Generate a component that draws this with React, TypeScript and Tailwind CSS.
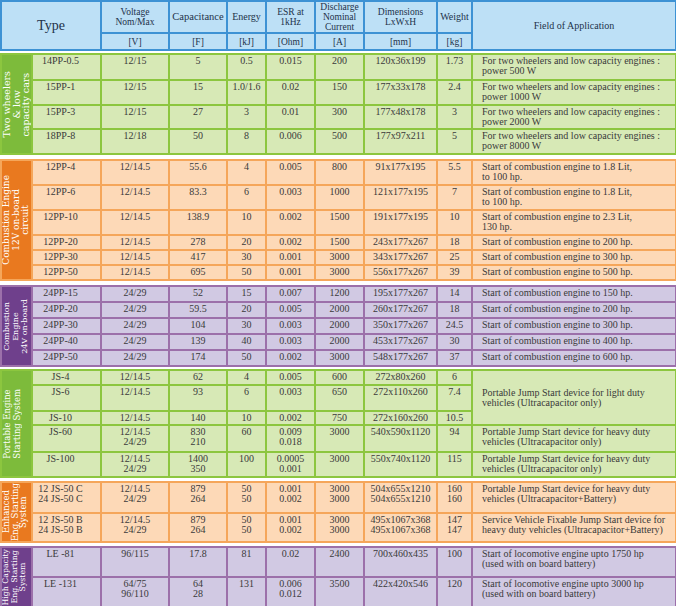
import React from 'react';

type Theme = { border: string; bg: string; label: string };

type Row = {
  h: string;
  cells: (string | null)[];
  mid?: boolean;
  fieldSpan?: number;
};

const green: Theme = { border: 'border-[#8cc63f]', bg: 'bg-[#d7e9b6]', label: 'bg-[#7dbb3b]' };
const orange: Theme = { border: 'border-[#f5a65a]', bg: 'bg-[#fdd9b7]', label: 'bg-[#e9791f]' };
const purple: Theme = { border: 'border-[#9c70aa]', bg: 'bg-[#d1c9e3]', label: 'bg-[#6f408c]' };

const Cols = () => (
  <colgroup>
    <col className="w-[31px]" />
    <col className="w-[69px]" />
    <col className="w-[68px]" />
    <col className="w-[58px]" />
    <col className="w-[39px]" />
    <col className="w-[49px]" />
    <col className="w-[49px]" />
    <col className="w-[73px]" />
    <col className="w-[35px]" />
    <col className="w-[204px]" />
  </colgroup>
);

const Group: React.FC<{ theme: Theme; label: React.ReactNode; rows: Row[]; className?: string }> = ({
  theme,
  label,
  rows,
  className = '',
}) => (
  <table className={`w-[675px] table-fixed border-collapse ${className}`}>
    <Cols />
    <tbody>
      {rows.map((r, i) => (
        <tr key={i} className={r.h}>
          {i === 0 && (
            <td rowSpan={rows.length} className={`${theme.label} ${theme.border} border-2 p-0 align-middle overflow-hidden`}>
              {label}
            </td>
          )}
          {r.cells.map((c, j) => {
            if (c === null) return null;
            const isField = j === 8;
            const align = isField ? 'text-left pl-[9px] pr-1' : j === 0 ? 'text-center pr-3' : 'text-center';
            const valign = r.mid && isField ? 'align-middle' : 'align-top pt-[1px]';
            return (
              <td
                key={j}
                rowSpan={isField && r.fieldSpan ? r.fieldSpan : undefined}
                className={`${theme.bg} ${theme.border} border-2 whitespace-pre-line leading-[10px] ${align} ${valign}`}
              >
                {c}
              </td>
            );
          })}
        </tr>
      ))}
    </tbody>
  </table>
);

const Label: React.FC<{ lines: string[]; size: string }> = ({ lines, size }) => (
  <div
    className={`mx-auto rotate-180 [writing-mode:vertical-rl] whitespace-nowrap text-center text-white font-['DejaVu_Serif',serif] ${size}`}
  >
    {lines.map((l, i) => (
      <div key={i}>{l}</div>
    ))}
  </div>
);

const twoWheel = (w: string) => `For two wheelers and low capacity engines :\npower ${w}`;
const comb = (hp: string) => `Start of combustion engine to ${hp} hp.`;

const greenRows: Row[] = [
  { h: 'h-[26px]', cells: ['14PP-0.5', '12/15', '5', '0.5', '0.015', '200', '120x36x199', '1.73', twoWheel('500 W')] },
  { h: 'h-[25px]', cells: ['15PP-1', '12/15', '15', '1.0/1.6', '0.02', '150', '177x33x178', '2.4', twoWheel('1000 W')] },
  { h: 'h-[24px]', cells: ['15PP-3', '12/15', '27', '3', '0.01', '300', '177x48x178', '3', twoWheel('2000 W')] },
  { h: 'h-[25px]', cells: ['18PP-8', '12/18', '50', '8', '0.006', '500', '177x97x211', '5', twoWheel('8000 W')] },
];

const orangeRows: Row[] = [
  { h: 'h-[25px]', cells: ['12PP-4', '12/14.5', '55.6', '4', '0.005', '800', '91x177x195', '5.5', 'Start of combustion engine to 1.8 Lit,\nto 100 hp.'] },
  { h: 'h-[25px]', cells: ['12PP-6', '12/14.5', '83.3', '6', '0.003', '1000', '121x177x195', '7', 'Start of combustion engine to 1.8 Lit,\nto 100 hp.'] },
  { h: 'h-[25px]', cells: ['12PP-10', '12/14.5', '138.9', '10', '0.002', '1500', '191x177x195', '10', 'Start of combustion engine to 2.3 Lit,\n130 hp.'] },
  { h: 'h-[15px]', cells: ['12PP-20', '12/14.5', '278', '20', '0.002', '1500', '243x177x267', '18', comb('200')] },
  { h: 'h-[15px]', cells: ['12PP-30', '12/14.5', '417', '30', '0.001', '3000', '343x177x267', '25', comb('300')] },
  { h: 'h-[15px]', cells: ['12PP-50', '12/14.5', '695', '50', '0.001', '3000', '556x177x267', '39', comb('500')] },
];

const purpleRows: Row[] = [
  { h: 'h-[16px]', cells: ['24PP-15', '24/29', '52', '15', '0.007', '1200', '195x177x267', '14', comb('150')] },
  { h: 'h-[16px]', cells: ['24PP-20', '24/29', '59.5', '20', '0.005', '2000', '260x177x267', '18', comb('200')] },
  { h: 'h-[16px]', cells: ['24PP-30', '24/29', '104', '30', '0.003', '2000', '350x177x267', '24.5', comb('300')] },
  { h: 'h-[16px]', cells: ['24PP-40', '24/29', '139', '40', '0.003', '2000', '453x177x267', '30', comb('400')] },
  { h: 'h-[16px]', cells: ['24PP-50', '24/29', '174', '50', '0.002', '3000', '548x177x267', '37', comb('600')] },
];

const heavy = 'Portable Jump Start device for heavy duty\nvehicles (Ultracapacitor only)';

const portableRows: Row[] = [
  {
    h: 'h-[15px]',
    mid: true,
    fieldSpan: 3,
    cells: ['JS-4', '12/14.5', '62', '4', '0.005', '600', '272x80x260', '6', 'Portable Jump Start device for light duty\nvehicles (Ultracapacitor only)'],
  },
  { h: 'h-[26px]', cells: ['JS-6', '12/14.5', '93', '6', '0.003', '650', '272x110x260', '7.4', null] },
  { h: 'h-[14px]', cells: ['JS-10', '12/14.5', '140', '10', '0.002', '750', '272x160x260', '10.5', null] },
  { h: 'h-[27px]', cells: ['JS-60', '12/14.5\n24/29', '830\n210', '60', '0.009\n0.018', '3000', '540x590x1120', '94', heavy] },
  { h: 'h-[25px]', cells: ['JS-100', '12/14.5\n24/29', '1400\n350', '100', '0.0005\n0.001', '3000', '550x740x1120', '115', heavy] },
];

const enhancedRows: Row[] = [
  {
    h: 'h-[30px]',
    cells: ['12 JS-50 C\n24 JS-50 C', '12/14.5\n24/29', '879\n264', '50\n50', '0.001\n0.002', '3000\n3000', '504x655x1210\n504x655x1210', '160\n160', 'Portable Jump Start device for heavy duty\nvehicles (Ultracapacitor+Battery)'],
  },
  {
    h: 'h-[28px]',
    cells: ['12 JS-50 B\n24 JS-50 B', '12/14.5\n24/29', '879\n264', '50\n50', '0.001\n0.002', '3000\n3000', '495x1067x368\n495x1067x368', '147\n147', 'Service Vehicle Fixable Jump Start device for\nheavy duty vehicles (Ultracapacitor+Battery)'],
  },
];

const highRows: Row[] = [
  { h: 'h-[30px]', cells: ['LE -81', '96/115', '17.8', '81', '0.02', '2400', '700x460x435', '100', 'Start of locomotive engine upto 1750 hp\n(used with on board battery)'] },
  { h: 'h-[30px]', cells: ['LE -131', '64/75\n96/110', '64\n28', '131', '0.006\n0.012', '3500', '422x420x546', '120', 'Start of locomotive engine upto 3000 hp\n(used with on board battery)'] },
];

const Header = () => {
  const th = 'border-2 border-[#3d92d4] bg-[#bde0f6] text-center align-middle leading-[10px]';
  return (
    <table className="w-[675px] table-fixed border-collapse text-[#22324a]">
      <Cols />
      <tbody>
        <tr className="h-[31px]">
          <td colSpan={2} rowSpan={2} className={`${th} text-[14px]`}>
            Type
          </td>
          <td className={`${th} text-[9.5px]`}>
            Voltage
            <br />
            Nom/Max
          </td>
          <td className={`${th} text-[10.5px]`}>Capacitance</td>
          <td className={`${th} text-[10px]`}>Energy</td>
          <td className={`${th} text-[9.5px]`}>
            ESR at
            <br />
            1kHz
          </td>
          <td className={`${th} text-[9.5px] leading-[9.5px]`}>
            Discharge
            <br />
            Nominal
            <br />
            Current
          </td>
          <td className={`${th} text-[9.5px]`}>
            Dimensions
            <br />
            LxWxH
          </td>
          <td className={`${th} text-[10px]`}>Weight</td>
          <td rowSpan={2} className={`${th} text-[10px]`}>
            Field of Application
          </td>
        </tr>
        <tr className="h-[17px] text-[9.5px]">
          <td className={th}>[V]</td>
          <td className={th}>[F]</td>
          <td className={th}>[kJ]</td>
          <td className={th}>[Ohm]</td>
          <td className={th}>[A]</td>
          <td className={th}>[mm]</td>
          <td className={th}>[kg]</td>
        </tr>
      </tbody>
    </table>
  );
};

export default function App() {
  return (
    <div className="w-[676px] h-[606px] overflow-hidden bg-white font-['Liberation_Serif',serif] text-[10px] text-[#3a3a3a]">
      <Header />
      <Group
        className="mt-[2px]"
        theme={green}
        rows={greenRows}
        label={<Label size="text-[9.5px] leading-[9.5px]" lines={['Two wheelers', '& low', 'capacity cars']} />}
      />
      <Group
        className="mt-[4px]"
        theme={orange}
        rows={orangeRows}
        label={<Label size="text-[9px] leading-[9.5px]" lines={['Combustion Engine', '12V on-board', 'circuit']} />}
      />
      <Group
        className="mt-[4px]"
        theme={purple}
        rows={purpleRows}
        label={<Label size="text-[8px] leading-[9px]" lines={['Combustion', 'Engine', '24V on-board']} />}
      />
      <Group
        className="mt-[2px]"
        theme={green}
        rows={portableRows}
        label={<Label size="text-[8.5px] leading-[10px]" lines={['Portable Engine', 'Starting System']} />}
      />
      <Group
        className="mt-[3px]"
        theme={orange}
        rows={enhancedRows}
        label={<Label size="text-[8.5px] leading-[8.5px]" lines={['Enhanced', 'Eng. Starting', 'System']} />}
      />
      <Group
        className="mt-[3px]"
        theme={purple}
        rows={highRows}
        label={<Label size="text-[7.8px] leading-[8.5px]" lines={['High Capacity', 'Eng. Starting', 'System']} />}
      />
    </div>
  );
}
